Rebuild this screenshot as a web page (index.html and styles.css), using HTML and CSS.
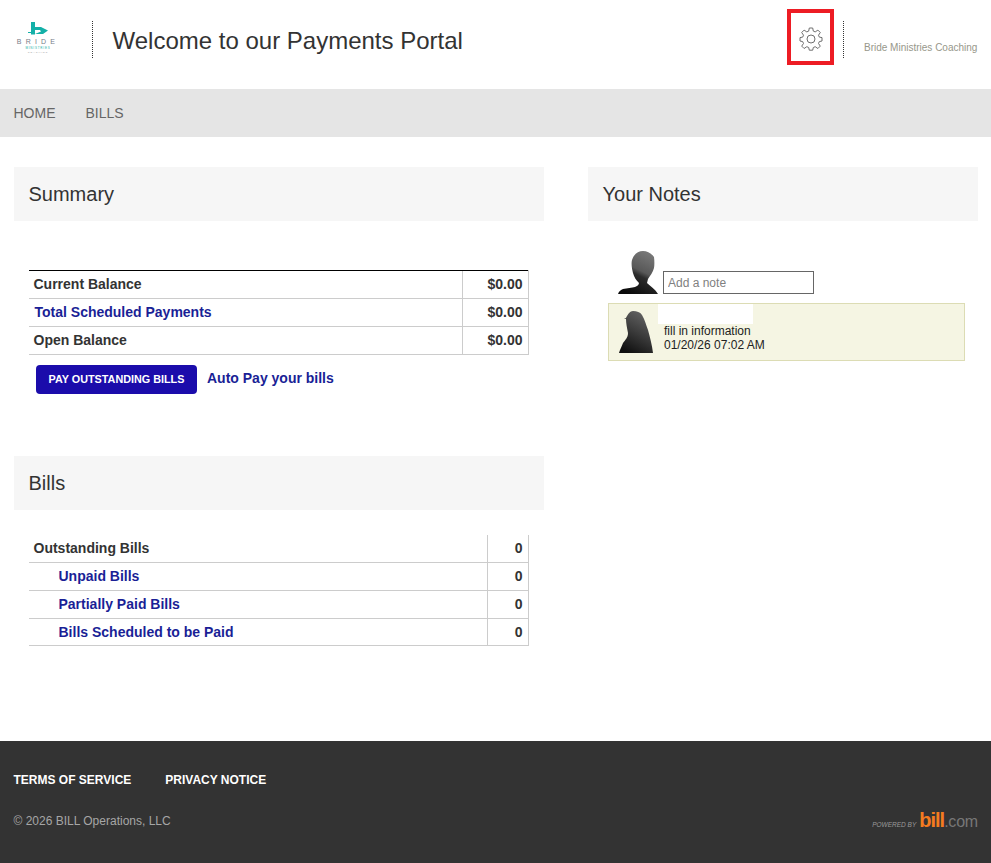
FILE: index.html
```html
<!DOCTYPE html>
<html lang="en">
<head>
<meta charset="utf-8">
<title>Payments Portal</title>
<link rel="stylesheet" href="styles.css">
</head>
<body>
<header class="top">
  <div class="logo">
    <svg class="logo-mark" width="21" height="14" viewBox="0 0 21 14"><rect x="3" y="0" width="4" height="12.500" fill="#14b0a8"/><path d="M0 10h3v1H0zM7 5h6l7 3.500-5 3.500H7l6-2.500-1-1.500H7z" fill="#14b0a8"/></svg>
    <div class="logo-word">BRIDE</div>
    <div class="logo-sub">MINISTRIES</div>
    <div class="logo-tiny">COACHING</div>
  </div>
  <div class="vsep vsep-left"></div>
  <h1 class="welcome">Welcome to our Payments Portal</h1>
  <div class="gear-box">
    <svg width="24" height="24" viewBox="0 0 24 24" fill="none" stroke="#6f6f6f" stroke-width="1" stroke-linejoin="round"><circle cx="12" cy="12" r="4"/><path d="M10.300 1h3.400l.6 3.100 1.900.8 2.700-1.800 2.400 2.400-1.800 2.700.8 1.900 2.700.5v3.400l-2.700.6-.8 1.900 1.800 2.600-2.400 2.400-2.700-1.800-1.900.8-.6 2.700h-3.400l-.6-2.700-1.900-.8-2.700 1.800-2.400-2.400 1.800-2.600-.8-1.900-2.700-.6v-3.400l2.700-.5.800-1.900-1.800-2.700 2.400-2.400 2.700 1.800 1.900-.8z"/></svg>
  </div>
  <div class="vsep vsep-right"></div>
  <div class="company">Bride Ministries Coaching</div>
</header>
<nav class="nav">
  <a class="nav-link">HOME</a>
  <a class="nav-link">BILLS</a>
</nav>
<main class="main">
  <div class="col-left">
    <section class="summary">
      <h2 class="panel-title">Summary</h2>
      <table class="data summary-table">
        <tr class="strong-top"><td class="label">Current Balance</td><td class="value">$0.00</td></tr>
        <tr><td class="label link-cell">Total Scheduled Payments</td><td class="value">$0.00</td></tr>
        <tr class="strong-top"><td class="label">Open Balance</td><td class="value">$0.00</td></tr>
      </table>
      <div class="actions">
        <button class="pay-btn">PAY OUTSTANDING BILLS</button>
        <a class="autopay">Auto Pay your bills</a>
      </div>
    </section>
    <section class="bills">
      <h2 class="panel-title">Bills</h2>
      <table class="data bills-table">
        <tr class="no-top"><td class="label">Outstanding Bills</td><td class="value">0</td></tr>
        <tr><td class="label sub">Unpaid Bills</td><td class="value">0</td></tr>
        <tr><td class="label sub">Partially Paid Bills</td><td class="value">0</td></tr>
        <tr class="last-row"><td class="label sub">Bills Scheduled to be Paid</td><td class="value">0</td></tr>
      </table>
    </section>
  </div>
  <section class="col-right">
    <h2 class="panel-title">Your Notes</h2>
    <div class="add-note">
      <svg width="40" height="43" viewBox="0 0 40 43"><defs><linearGradient id="g1" x1="0.75" y1="0" x2="0.3" y2="1"><stop offset="0" stop-color="#7a7a7a"/><stop offset="0.45" stop-color="#585858"/><stop offset="0.56" stop-color="#2c2c2c"/><stop offset="1" stop-color="#0a0a0a"/></linearGradient></defs><path d="M25 0c4 0 8 2 11 6 .5 4 .5 8 0 11-1 4-4 8-6 11l-1 4c3 3 8 6 11 11H0c1-3 3-4 5-5 4-1 9-1 12-2 2-1 4-2 4-4-3-3-5-6-6-10-1-4-2-9-1-13 2-6 6-9 11-9z" fill="url(#g1)"/></svg>
      <input class="note-input" placeholder="Add a note">
    </div>
    <article class="note">
      <svg class="note-avatar" width="34" height="42" viewBox="0 0 34 42"><defs><linearGradient id="g2" x1="0.75" y1="0" x2="0.3" y2="1"><stop offset="0" stop-color="#666"/><stop offset="0.5" stop-color="#3c3c3c"/><stop offset="1" stop-color="#101010"/></linearGradient></defs><path d="M14 0c4 0 7 1 9 4 3 5 4 10 6 15 2 7 4 15 5 23H0c1-4 3-7 4-10 2-3 5-5 5-10-1-5-2-10-2-14L5 7.500 7 7c2-4 4-7 7-7z" fill="url(#g2)"/></svg>
      <div class="note-body">
        <div class="note-blank"></div>
        <div class="note-text">fill in information</div>
        <div class="note-text">01/20/26 07:02 AM</div>
      </div>
    </article>
  </section>
</main>
<footer class="footer">
  <div class="foot-links">
    <a class="foot-link">TERMS OF SERVICE</a>
    <a class="foot-link">PRIVACY NOTICE</a>
  </div>
  <div class="foot-bottom">
    <span class="copyright">© 2026 BILL Operations, LLC</span>
    <span class="powered"><span class="pw-by">POWERED BY</span><span class="pw-bill">bill</span><span class="pw-com">.com</span></span>
  </div>
</footer>
</body>
</html>
```
FILE: styles.css
```css
* { box-sizing: border-box; }
html, body { margin: 0; padding: 0; }
body { font-family: "Liberation Sans", Arial, sans-serif; color: #333; background: #fff; width: 991px; height: 863px; overflow: hidden; }

.top { height: 89px; display: flex; align-items: flex-start; }
.logo { width: 46px; margin: 22px 0 0 15px; display: flex; flex-direction: column; align-items: center; }
.logo-mark { display: block; margin-left: 1px; }
.logo-word { font-size: 7px; letter-spacing: 4.200px; line-height: 8px; color: #777c88; margin-top: 2px; white-space: nowrap; }
.logo-sub { font-size: 3px; letter-spacing: .8px; line-height: 5px; color: #14b0a8; white-space: nowrap; }
.logo-tiny { font-size: 2.500px; letter-spacing: .9px; line-height: 3px; color: #999; white-space: nowrap; }
.vsep { width: 0; height: 37px; border-left: 1px dotted #333; margin-top: 21px; }
.vsep-left { margin-left: 31px; }
.welcome { margin: 26px 0 0 19.500px; font-size: 24px; line-height: 30px; font-weight: 400; color: #333; width: 674.500px; white-space: nowrap; }
.gear-box { width: 47px; height: 56px; margin-top: 9px; padding-top: 4px; border: 4px solid #ed1c24; display: flex; align-items: center; justify-content: center; flex: none; }
.vsep-right { margin-left: 9px; }
.company { margin: 42px 0 0 20px; font-size: 10px; line-height: 12px; color: #97978a; white-space: nowrap; }

.nav { height: 48px; background: #e5e5e5; display: flex; align-items: center; padding-left: 13.500px; gap: 30px; }
.nav-link { font-size: 14px; color: #666; }

.main { height: 604px; padding: 30px 13px 0 14px; display: flex; justify-content: space-between; }
.col-left { width: 530px; }
.col-right { width: 390px; }
.panel-title { margin: 0; height: 54px; background: #f6f6f6; padding-left: 14.500px; font-size: 20px; line-height: 54px; font-weight: 400; color: #333; }

.data { border-collapse: collapse; width: 500px; margin-left: 15px; font-size: 14px; font-weight: 700; }
.data td { height: 28px; padding: 0; border-top: 1px solid #ccc; border-bottom: 1px solid #ccc; }
.data .strong-top td { border-top: 1px solid #000; }
.data .no-top td { border-top: 0; height: 27px; }
.data .last-row td { height: 27px; padding-top: 1px; }
.data .label { padding-left: 4.500px; }
.data .value { text-align: right; padding-right: 5.500px; border-left: 1px solid #ccc; border-right: 1px solid #ccc; }
.summary-table { margin-top: 49px; }
.summary-table td { padding-bottom: 2px; }
.summary-table .value { width: 66px; }
.bills-table .value { width: 41px; }
.bills-table { margin-top: 25px; }
.link-cell, .data .sub, .autopay { color: #1a1f96; }
.data .link-cell { padding-left: 5.500px; }
.data .sub { padding-left: 29.500px; }

.actions { display: flex; align-items: center; margin: 10px 0 0 22px; }
.pay-btn { width: 161px; height: 29px; border: 0; border-radius: 4px; background: #1b0cab; color: #fff; font: 700 10.800px "Liberation Sans", Arial, sans-serif; padding: 0 0 2px; }
.autopay { font-size: 14px; font-weight: 700; margin: -3px 0 0 10px; }
.bills { margin-top: 62px; }

.add-note { display: flex; align-items: flex-end; padding: 30px 0 0 30px; }
.note-input { width: 151px; height: 23px; margin-left: 5px; border: 1px solid #666; padding: 0 4px; font: 12px "Liberation Sans", Arial, sans-serif; color: #333; border-radius: 0; outline: 0; background: #fff; }
.note-input::placeholder { color: #808080; opacity: 1; }
.note { display: flex; width: 357px; height: 58px; margin: 9px 0 0 20px; background: #f5f5e3; border: 1px solid #dcdcb4; padding-left: 10px; }
.note-avatar { margin-top: 7px; flex: none; }
.note-body { margin-left: 11px; font-size: 12px; line-height: 14px; color: #222; }
.note-blank { width: 95px; height: 20px; background: #fff; margin-left: -6px; }
.note-text { white-space: nowrap; }

.footer { height: 122px; background: #333; padding: 32px 13px 0 13.500px; }
.foot-links { display: flex; gap: 34px; }
.foot-link { font-size: 12px; line-height: 15px; font-weight: 700; color: #fff; }
.foot-bottom { display: flex; justify-content: space-between; align-items: flex-start; margin-top: 25px; }
.copyright { font-size: 12px; line-height: 15px; color: #a6a6a6; padding-top: 1px; }
.powered { display: flex; align-items: baseline; white-space: nowrap; margin-top: -3px; }
.pw-by { font-size: 6.500px; font-style: italic; color: #9a9a9a; margin-right: 3px; }
.pw-bill { font-size: 20px; line-height: 20px; font-weight: 700; letter-spacing: -1px; color: #f47b20; }
.pw-com { font-size: 16px; line-height: 20px; letter-spacing: -.2px; color: #777; }
```
